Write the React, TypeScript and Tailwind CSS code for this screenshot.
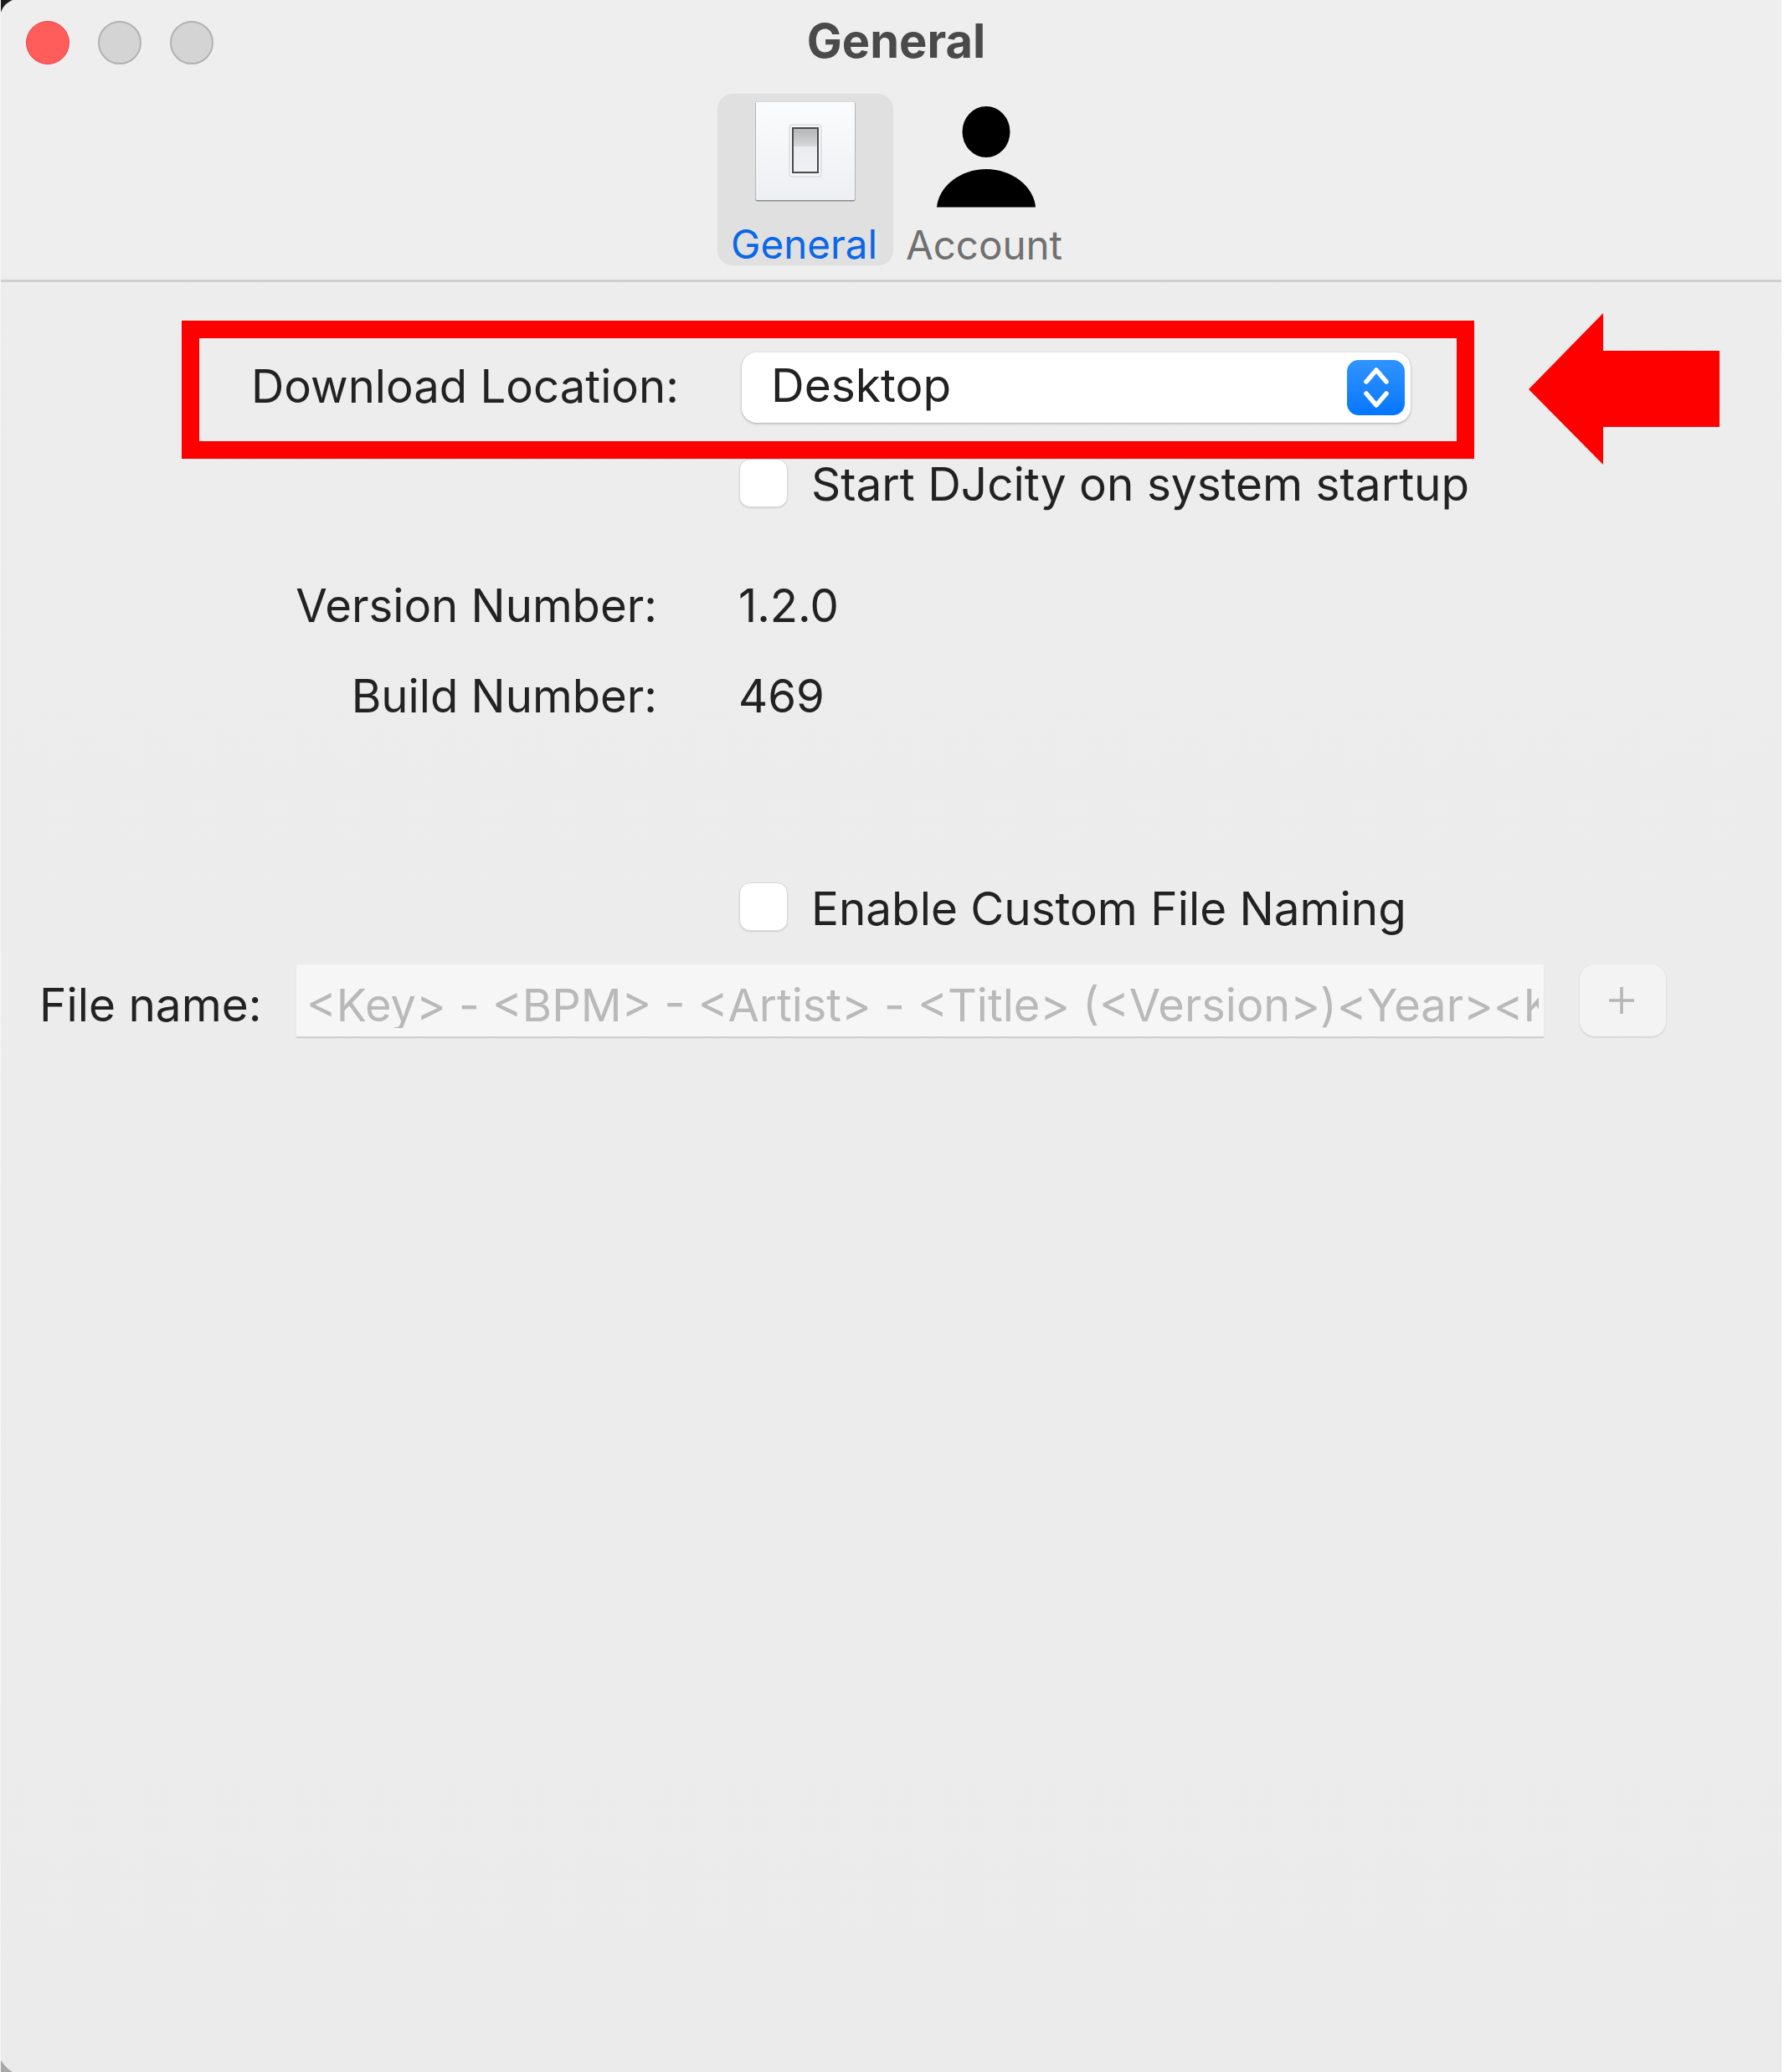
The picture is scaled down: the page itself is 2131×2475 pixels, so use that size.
const SF = 'font-["Inter","Liberation_Sans",sans-serif]';

function SwitchIcon() {
  return (
    <svg width="120" height="120" viewBox="0 0 120 120">
      <defs>
        <linearGradient id="plate" x1="0" y1="0" x2="0" y2="1">
          <stop offset="0" stopColor="#fbfcfd" />
          <stop offset="1" stopColor="#eeeff2" />
        </linearGradient>
        <linearGradient id="rocker" x1="0" y1="0" x2="0" y2="1">
          <stop offset="0" stopColor="#b4b5b7" />
          <stop offset="0.4" stopColor="#d5d6d8" />
          <stop offset="0.42" stopColor="#e9ebee" />
          <stop offset="1" stopColor="#f0f1f4" />
        </linearGradient>
      </defs>
      <rect x="0.5" y="0.5" width="119" height="119" rx="2" fill="#8a8a8a" />
      <rect x="1" y="0.5" width="118" height="117.5" rx="1.5" fill="url(#plate)" />
      <rect x="41" y="28" width="38" height="62" rx="3" fill="#f6f6f7" stroke="#d0d0d2" />
      <rect x="45" y="32" width="30" height="53" fill="url(#rocker)" stroke="#4a4a4e" strokeWidth="2" />
    </svg>
  );
}

function PersonIcon() {
  return (
    <svg className="ml-[12px] shrink-0" width="118" height="121" viewBox="0 0 118 121">
      <ellipse cx="59" cy="30.5" rx="28.5" ry="30.5" fill="#000" />
      <path d="M0 120.5C2 96 28 75 59 75C90 75 116 96 118 120.5Z" fill="#000" />
    </svg>
  );
}

function Checkbox() {
  return (
    <div className="h-[58px] w-[58px] shrink-0 rounded-[13px] border border-[#d8d8d8] bg-white shadow-[0_1px_2px_rgba(0,0,0,0.12)]" />
  );
}

export default function App() {
  return (
    <div className={`${SF} relative flex h-[2475px] w-[2131px] flex-col overflow-hidden border-l border-r-[3px] border-l-[#f6f6f6] border-r-white bg-[#ececec] text-[54.5px] leading-none text-[#222222]`}>
      {/* title bar + toolbar */}
      <header className="flex h-[337px] shrink-0 flex-col border-b-[3px] border-[#cfcfcf] bg-[#eeeeee]">
        <div className="grid h-[112px] grid-cols-[1fr_auto_1fr] pl-[10px]">
          <div className="flex gap-[34px] pl-[20px] pt-[25px]">
            <span className="h-[52px] w-[52px] rounded-full border border-[#e5484a] bg-[#ff5c5c]" />
            <span className="h-[52px] w-[52px] rounded-full border-2 border-[#b2b2b2] bg-[#d4d4d4]" />
            <span className="h-[52px] w-[52px] rounded-full border-2 border-[#b2b2b2] bg-[#d4d4d4]" />
          </div>
          <h1 className="pl-[2px] pt-[21px] text-[56px] font-bold text-[#4a4a4a]">General</h1>
        </div>
        <nav className="flex pl-[856px]">
          <div className="flex h-[205px] w-[210px] flex-col items-center rounded-[18px] bg-[#e0e0e0] pt-[9px]">
            <SwitchIcon />
            <span className="mr-[3px] mt-[27px] text-[47.5px] text-[#0a67e8]">General</span>
          </div>
          <div className="flex h-[205px] w-[210px] flex-col items-center pt-[15px]">
            <PersonIcon />
            <span className="ml-[7px] mt-[21px] text-[47.5px] text-[#707070]">Account</span>
          </div>
        </nav>
      </header>

      <main className="flex h-full flex-col bg-gradient-to-b from-[#ededed] to-[#ebebeb] pt-[46px]">
        {/* annotated row */}
        <div className="ml-[216px] flex h-[165px] w-[1544px] items-center border-[21px] border-[#ff0000] pl-[62px]">
          <span className="mb-[9px] w-[586px] shrink-0">Download Location:</span>
          <div className="mb-[6px] flex h-[84px] w-[799px] items-center justify-between rounded-[18px] bg-white pl-[35px] pr-[7px] shadow-[0_1px_3px_rgba(0,0,0,0.3)]">
            <span className="mb-[5px] text-[55px]">Desktop</span>
            <div className="flex h-[66px] w-[69px] items-center justify-center rounded-[14px] bg-gradient-to-b from-[#2f94ff] to-[#0276fe]">
              <svg width="30" height="50" viewBox="0 0 30 50" fill="none" stroke="#ffffff" strokeWidth="5.5" strokeLinecap="round" strokeLinejoin="round">
                <path d="M3 18L15 4L27 18" />
                <path d="M3 32L15 46L27 32" />
              </svg>
            </div>
          </div>
        </div>

        <div className="ml-[882px] flex items-center gap-[28px] text-[54.9px]">
          <Checkbox />
          <span className="mt-[2px]">Start DJcity on system startup</span>
        </div>

        <div className="mt-[90px] grid grid-cols-[784px_auto] gap-x-[97px] gap-y-[53px]">
          <span className="text-right">Version Number:</span>
          <span>1.2.0</span>
          <span className="text-right">Build Number:</span>
          <span>469</span>
        </div>

        <div className="ml-[882px] mt-[195px] flex items-center gap-[28px] text-[54.8px]">
          <Checkbox />
          <span className="mt-[5px]">Enable Custom File Naming</span>
        </div>

        <div className="mt-[39px] flex items-center pl-[46px]">
          <span className="w-[307px] shrink-0 pt-[12px] text-[54.9px]">File name:</span>
          <div className="h-[86px] w-[1490px] shrink-0 overflow-hidden whitespace-nowrap bg-[#f6f6f6] pl-[12px] pr-[6px] pt-[22px] text-[54.1px] text-[#b9b9b9] shadow-[0_2px_1px_rgba(0,0,0,0.12)]">
            <div className="overflow-hidden">&lt;Key&gt; - &lt;BPM&gt; - &lt;Artist&gt; - &lt;Title&gt; (&lt;Version&gt;)&lt;Year&gt;&lt;Key&gt;</div>
          </div>
          <div className="ml-[43px] flex h-[86px] w-[103px] items-center justify-center rounded-[18px] bg-[#f3f3f3] pr-[3px] shadow-[0_1px_2px_rgba(0,0,0,0.15)]">
            <svg width="30" height="32" viewBox="0 0 30 32" stroke="#b5b5b5" strokeWidth="3.5">
              <path d="M15 0V32M0 16H30" />
            </svg>
          </div>
        </div>
      </main>

      {/* annotation arrow */}
      <svg className="absolute left-[1825px] top-[374px]" width="228" height="181" viewBox="0 0 228 181">
        <path d="M0 91L89 0V45H228V136H89V181Z" fill="#ff0000" />
      </svg>

      {/* desktop showing through at the rounded corners */}
      <svg className="absolute -left-px top-0" width="16" height="16" viewBox="0 0 16 16">
        <path d="M0 0H15C8 3 3 8 1 15H0Z" fill="#1c1c1c" />
      </svg>
      <svg className="absolute -left-px bottom-0" width="16" height="16" viewBox="0 0 16 16">
        <path d="M0 0C3 6 8 12 15 16H0Z" fill="#a8a8a8" />
      </svg>
    </div>
  );
}
